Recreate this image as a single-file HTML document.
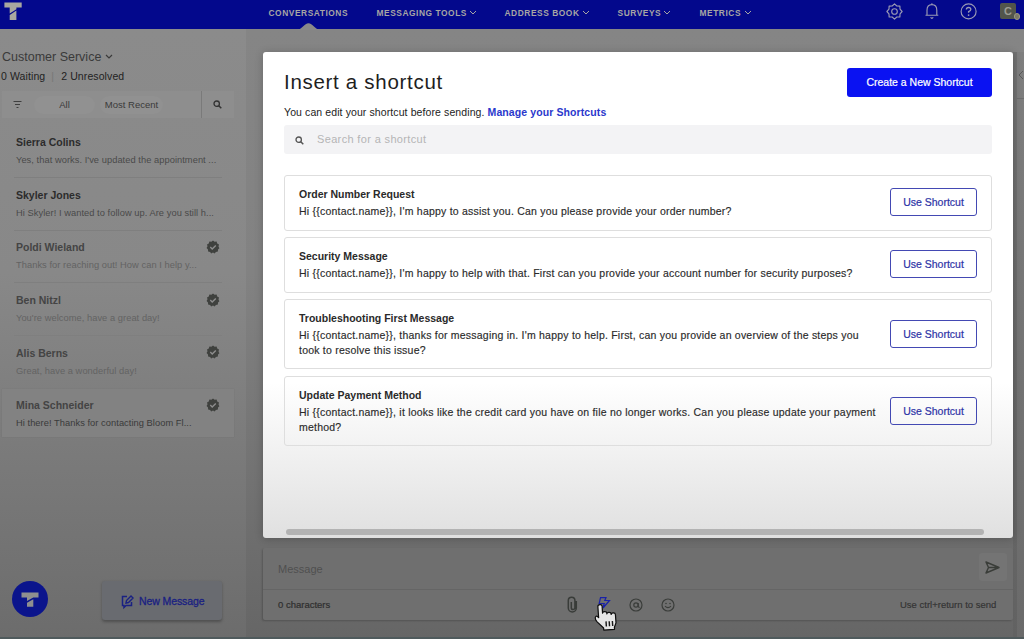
<!DOCTYPE html>
<html><head><meta charset="utf-8">
<style>
*{box-sizing:border-box;margin:0;padding:0}
html,body{width:1024px;height:639px;overflow:hidden}
body{font-family:"Liberation Sans",sans-serif;position:relative;background:#7c7c7c}
.abs{position:absolute}
svg{position:absolute;overflow:visible}
#nav{left:0;top:0;width:1024px;height:29px;background:#03088c}
.nv{position:absolute;top:8px;font-size:8.4px;font-weight:bold;color:#a7a6a4;letter-spacing:0.55px;white-space:nowrap}
#side{left:0;top:29px;width:246px;height:610px;background:linear-gradient(#8b8b8b,#888888 40%,#6c6c6c 100%)}
#main{left:246px;top:29px;width:778px;height:610px;background:linear-gradient(#858585,#828282 40%,#666666 100%)}
.name{position:absolute;left:16px;font-size:10.5px;font-weight:bold;color:#2c2c2c;white-space:nowrap}
.rs{color:#444}
.prev{position:absolute;left:16px;font-size:9.3px;color:#4a4a4a;white-space:nowrap;letter-spacing:0.05px}
.pr{color:#636363}
.sep{position:absolute;left:14px;width:208px;height:1px;background:#7f7f7f}
.badge{position:absolute;left:206px;width:13px;height:13px}
#modal{left:263px;top:52px;width:750px;height:486px;background:linear-gradient(#fff 0%,#fff 68%,#e0e0e0 100%);border-radius:3px;box-shadow:0 1px 9px rgba(0,0,0,0.22)}
.card{position:absolute;left:284px;width:708px;border:1px solid #dedede;border-radius:3px;background:transparent}
.ct{position:absolute;left:299px;font-size:10.5px;font-weight:bold;color:#2a2a2a;white-space:nowrap}
.cb{position:absolute;left:299px;font-size:10.5px;color:#2a2a2a;white-space:nowrap;line-height:14.5px;letter-spacing:0.22px;-webkit-text-stroke:0.15px #2a2a2a}
.ub{position:absolute;left:890px;width:87px;height:28px;border:1px solid #4349b3;border-radius:3px;color:#2d33a6;font-size:10.5px;text-align:center;line-height:26px;-webkit-text-stroke:0.2px #2d33a6}
</style></head><body>
<div id="nav" class="abs"></div>
<svg style="left:4px;top:2px" width="18" height="18" viewBox="0 0 18 18"><path d="M0.4 0.6H17.7V5.6H12.4V7.2L5.7 11.6V5.6H0.4Z" fill="#a9a8a0"/><path d="M5.7 13L12.4 8.6V17.9H5.7Z" fill="#a9a8a0"/></svg>
<div class="nv" style="left:268.5px">CONVERSATIONS</div>
<div class="nv" style="left:376.5px">MESSAGING TOOLS</div>
<div class="nv" style="left:504.5px">ADDRESS BOOK</div>
<div class="nv" style="left:617.5px">SURVEYS</div>
<div class="nv" style="left:699.5px">METRICS</div>
<svg style="left:469px;top:10px" width="8" height="5" viewBox="0 0 8 5"><path d="M1 1L4 4L7 1" fill="none" stroke="#a7a6a4" stroke-width="1"/></svg>
<svg style="left:582px;top:10px" width="8" height="5" viewBox="0 0 8 5"><path d="M1 1L4 4L7 1" fill="none" stroke="#a7a6a4" stroke-width="1"/></svg>
<svg style="left:663px;top:10px" width="8" height="5" viewBox="0 0 8 5"><path d="M1 1L4 4L7 1" fill="none" stroke="#a7a6a4" stroke-width="1"/></svg>
<svg style="left:744px;top:10px" width="8" height="5" viewBox="0 0 8 5"><path d="M1 1L4 4L7 1" fill="none" stroke="#a7a6a4" stroke-width="1"/></svg>
<!-- nav icons -->
<svg style="left:886px;top:3px" width="17" height="17" viewBox="0 0 17 17"><path d="M8.50 0.90 L10.80 2.96 L13.87 3.13 L14.04 6.20 L16.10 8.50 L14.04 10.80 L13.87 13.87 L10.80 14.04 L8.50 16.10 L6.20 14.04 L3.13 13.87 L2.96 10.80 L0.90 8.50 L2.96 6.20 L3.13 3.13 L6.20 2.96Z" fill="none" stroke="#9a9ab4" stroke-width="1.15" stroke-linejoin="round"/><circle cx="8.5" cy="8.5" r="2.8" fill="none" stroke="#9a9ab4" stroke-width="1.15"/></svg>
<svg style="left:924px;top:2px" width="16" height="19" viewBox="0 0 16 19"><path d="M1.5 13.2H14.3M3 13.2V8.2Q3 2.6 7.9 2.6T12.8 8.2V13.2" fill="none" stroke="#9a9ab4" stroke-width="1.15"/><path d="M7.9 1.2V2.6" stroke="#9a9ab4" stroke-width="1.1"/><path d="M6.6 15.3Q7.9 17.3 9.2 15.3" fill="none" stroke="#9a9ab4" stroke-width="1.15"/></svg>
<svg style="left:960px;top:3px" width="17" height="17" viewBox="0 0 17 17"><circle cx="8.6" cy="8.4" r="7.5" fill="none" stroke="#9a9ab4" stroke-width="1.15"/><path d="M6.4 6.6Q6.4 4.5 8.6 4.5T10.8 6.5Q10.8 7.8 8.6 8.6V9.8" fill="none" stroke="#9a9ab4" stroke-width="1.35"/><circle cx="8.6" cy="12.1" r="0.85" fill="#9a9ab4"/></svg>
<div class="abs" style="left:1000px;top:3px;width:16px;height:16px;background:#52554b;border-radius:2px"></div>
<div class="abs" style="left:1004px;top:5px;font-size:11px;font-weight:bold;color:#9c9c94">C</div>
<div class="abs" style="left:1013.5px;top:13px;width:6.5px;height:6.5px;border-radius:50%;background:#7a7866;border:1.4px solid #9a9684"></div>

<div id="side" class="abs"></div>
<div id="main" class="abs"></div>
<svg style="left:297px;top:22px" width="23" height="8" viewBox="0 0 23 8"><path d="M-1 8C5 8 7.5 1.3 11.5 1.3S18 8 24 8Z" fill="#8a8a8a"/></svg>
<!-- right sliver -->
<div class="abs" style="left:1013px;top:52px;width:4px;height:587px;background:linear-gradient(#727272,#626262)"></div>
<div class="abs" style="left:1017px;top:52px;width:7px;height:587px;background:linear-gradient(#7f7f7f,#6a6a6a)"></div>
<div class="abs" style="left:1017px;top:98px;width:7px;height:1px;background:#6e6e6e"></div>
<svg style="left:1018px;top:70px" width="6" height="10" viewBox="0 0 6 10"><path d="M5 1L1 5L5 9" fill="none" stroke="#5a5a5a" stroke-width="1"/></svg>

<!-- sidebar -->
<div class="abs" style="left:2px;top:50px;font-size:12.5px;color:#3a3a3a">Customer Service</div>
<svg style="left:105px;top:54px" width="8" height="5" viewBox="0 0 8 5"><path d="M1 1L4 4L7 1" fill="none" stroke="#3a3a3a" stroke-width="1.2"/></svg>
<div class="abs" style="left:1px;top:70px;font-size:10.5px;color:#222;letter-spacing:0.1px">0 Waiting <span style="color:#777">&nbsp;|&nbsp;</span> <span style="margin-left:1px">2 Unresolved</span></div>
<div class="abs" style="left:2px;top:91px;width:232px;height:27px;background:#8e8e8e"></div>
<svg style="left:13px;top:100px" width="9" height="9" viewBox="0 0 9 9"><path d="M0.5 1.5H8.5M2 4.5H7M3.5 7.5H5.5" stroke="#3e3e3e" stroke-width="1.2"/></svg>
<div class="abs" style="left:34px;top:96px;width:61px;height:18px;border-radius:9px;background:#919191;font-size:9.5px;text-align:center;line-height:18px;color:#3a3a3a">All</div>
<div class="abs" style="left:100px;top:96px;width:63px;height:18px;border-radius:9px;background:#919191;font-size:9.5px;text-align:center;line-height:18px;color:#3a3a3a">Most Recent</div>
<div class="abs" style="left:201px;top:91px;width:1px;height:27px;background:#7a7a7a"></div>
<svg style="left:213px;top:100px" width="9" height="9" viewBox="0 0 9 9"><circle cx="3.7" cy="3.7" r="2.7" fill="none" stroke="#333" stroke-width="1.3"/><path d="M5.8 5.8L8.3 8.3" stroke="#333" stroke-width="1.5"/></svg>

<div class="name" style="top:136px">Sierra Colins</div>
<div class="prev" style="top:155px">Yes, that works. I've updated the appointment ...</div>
<div class="sep" style="top:177px"></div>
<div class="name" style="top:189px">Skyler Jones</div>
<div class="prev" style="top:208px">Hi Skyler! I wanted to follow up. Are you still h...</div>
<div class="sep" style="top:230px"></div>
<div class="name rs" style="top:241px">Poldi Wieland</div>
<div class="prev pr" style="top:260px">Thanks for reaching out! How can I help y...</div>
<div class="sep" style="top:282px"></div>
<div class="name rs" style="top:294px">Ben Nitzl</div>
<div class="prev pr" style="top:313px">You're welcome, have a great day!</div>
<div class="sep" style="top:335px"></div>
<div class="name rs" style="top:347px">Alis Berns</div>
<div class="prev pr" style="top:366px">Great, have a wonderful day!</div>
<div class="abs" style="left:2px;top:389px;width:232px;height:48px;background:#828282;box-shadow:0 0 1px rgba(0,0,0,0.15)"></div>
<div class="name rs" style="top:399px">Mina Schneider</div>
<div class="prev" style="top:418px;color:#3a3a3a">Hi there! Thanks for contacting Bloom Fl...</div>
<svg style="left:206px;top:240px" width="14" height="14" viewBox="0 0 14 14"><use href="#seal"/></svg>
<svg style="left:206px;top:293px" width="14" height="14" viewBox="0 0 14 14"><use href="#seal"/></svg>
<svg style="left:206px;top:345px" width="14" height="14" viewBox="0 0 14 14"><use href="#seal"/></svg>
<svg style="left:206px;top:398px" width="14" height="14" viewBox="0 0 14 14"><use href="#seal"/></svg>
<svg width="0" height="0"><defs><g id="seal"><path d="M7 .6l1.6 1.2 2-.2.6 1.9 1.8 1-.5 1.9.9 1.8-1.4 1.4-.1 2-2 .4L8.6 13.4 7 12.5 5.2 13.4 4.1 11.9l-2-.4-.1-2L.6 8.1l.9-1.8L1 4.4l1.8-1 .6-1.9 2 .2z" fill="#3f413e"/><path d="M4.3 7.1l1.9 1.9 3.6-3.6" fill="none" stroke="#8d8d8d" stroke-width="1.4"/></g></defs></svg>

<!-- bottom left -->
<div class="abs" style="left:12px;top:581px;width:36px;height:36px;border-radius:50%;background:#0b148c"></div>
<svg style="left:20px;top:590px" width="20" height="20" viewBox="0 0 20 20"><path d="M1.5 2.5H18.5V7.5H13.3L7 11V7.5H1.5Z" fill="#8f8f8f"/><path d="M13.3 9.3V16.8H7V12.8Z" fill="#8f8f8f"/></svg>
<div class="abs" style="left:102px;top:581px;width:120px;height:39px;border-radius:3px;background:#696b70;box-shadow:0 1.5px 3px rgba(0,0,0,0.28)"></div>
<svg style="left:121px;top:595px" width="13" height="13" viewBox="0 0 13 13"><path d="M6 1.5H1.5V10.5H3V12.5L5 10.5H10.5V7" fill="none" stroke="#1a2182" stroke-width="1.5"/><path d="M5 8L5.5 5.5L10 1L12 3L7.5 7.5Z" fill="none" stroke="#1a2182" stroke-width="1.4"/></svg>
<div class="abs" style="left:139px;top:595px;font-size:10.5px;color:#1a2182;letter-spacing:-0.1px;-webkit-text-stroke:0.3px #1a2182">New Message</div>

<!-- modal -->
<div id="modal" class="abs"></div>
<div class="abs" style="left:284px;top:70px;font-size:20.5px;color:#1e1e1e;letter-spacing:0.7px">Insert a shortcut</div>
<div class="abs" style="left:284px;top:106px;font-size:10.5px;color:#222;letter-spacing:0.1px">You can edit your shortcut before sending. <b style="color:#2a38cc">Manage your Shortcuts</b></div>
<div class="abs" style="left:847px;top:68px;width:145px;height:29px;background:#0a12f2;border-radius:3px;color:#fff;font-size:10.5px;text-align:center;line-height:29px;-webkit-text-stroke:0.2px #fff">Create a New Shortcut</div>
<div class="abs" style="left:284px;top:125px;width:708px;height:29px;background:#f3f3f5;border-radius:3px"></div>
<svg style="left:295px;top:136px" width="9" height="9" viewBox="0 0 9 9"><circle cx="3.7" cy="3.7" r="2.7" fill="none" stroke="#555" stroke-width="1.3"/><path d="M5.8 5.8L8.3 8.3" stroke="#555" stroke-width="1.5"/></svg>
<div class="abs" style="left:317px;top:133px;font-size:11px;color:#b5b5b5;letter-spacing:0.35px">Search for a shortcut</div>

<div class="card" style="top:175px;height:56px"></div>
<div class="ct" style="top:188px">Order Number Request</div>
<div class="cb" style="top:204px">Hi {{contact.name}}, I'm happy to assist you. Can you please provide your order number?</div>
<div class="ub" style="top:188px">Use Shortcut</div>

<div class="card" style="top:237px;height:56px"></div>
<div class="ct" style="top:250px">Security Message</div>
<div class="cb" style="top:266px">Hi {{contact.name}}, I'm happy to help with that. First can you provide your account number for security purposes?</div>
<div class="ub" style="top:250px">Use Shortcut</div>

<div class="card" style="top:299px;height:70px"></div>
<div class="ct" style="top:312px">Troubleshooting First Message</div>
<div class="cb" style="top:328px">Hi {{contact.name}}, thanks for messaging in. I'm happy to help. First, can you provide an overview of the steps you<br>took to resolve this issue?</div>
<div class="ub" style="top:320px">Use Shortcut</div>

<div class="card" style="top:375.5px;height:70.5px"></div>
<div class="ct" style="top:389px">Update Payment Method</div>
<div class="cb" style="top:405px">Hi {{contact.name}}, it looks like the credit card you have on file no longer works. Can you please update your payment<br>method?</div>
<div class="ub" style="top:397px">Use Shortcut</div>
<div class="abs" style="left:286px;top:529px;width:698px;height:6px;border-radius:3px;background:#b3b3b3"></div>

<!-- composer -->
<div class="abs" style="left:263px;top:548px;width:750px;height:72px;background:#6f6f6f;border-radius:2px;box-shadow:-1px 1px 2px rgba(0,0,0,0.2)"></div>
<div class="abs" style="left:263px;top:589px;width:750px;height:1px;background:#656565"></div>
<div class="abs" style="left:278px;top:563px;font-size:11px;color:#505050">Message</div>
<div class="abs" style="left:979px;top:553px;width:28px;height:28px;border-radius:3px;background:#747474"></div>
<svg style="left:985px;top:561px" width="15" height="13" viewBox="0 0 15 13"><path d="M1 1L14 6.5L1 12L3.5 6.5Z M3.5 6.5H14" fill="none" stroke="#3a3d39" stroke-width="1.45" stroke-linejoin="round"/></svg>
<div class="abs" style="left:278px;top:599px;font-size:9.5px;color:#2e2e2e;-webkit-text-stroke:0.2px #2e2e2e">0 characters</div>
<div class="abs" style="left:900px;top:599px;font-size:9.5px;color:#333;-webkit-text-stroke:0.15px #333">Use ctrl+return to send</div>
<svg style="left:566px;top:596px" width="14" height="17" viewBox="0 0 14 17"><path d="M10.3 5V12A4 4 0 0 1 2.3 12V4.6A3.3 3.3 0 0 1 8.9 4.6V11.8A1.8 1.8 0 0 1 5.3 11.8V6" fill="none" stroke="#393c39" stroke-width="1.5"/></svg>
<svg style="left:598px;top:597px" width="13" height="12" viewBox="0 0 13 12"><path d="M2.5 0.7H8L6.8 3.5H11.5L5 11L6.2 6.5H1.2Z" fill="none" stroke="#1a22a8" stroke-width="1.2"/></svg>
<svg style="left:629px;top:598px" width="14" height="14" viewBox="0 0 14 14"><circle cx="7" cy="7" r="6" fill="none" stroke="#3a3d3a" stroke-width="1.2"/><circle cx="7" cy="7" r="2.2" fill="none" stroke="#3a3d3a" stroke-width="1.2"/><path d="M9.2 5V8Q9.2 9.5 10.8 9.2" fill="none" stroke="#3a3d3a" stroke-width="1.1"/></svg>
<svg style="left:661px;top:598px" width="14" height="14" viewBox="0 0 14 14"><circle cx="7" cy="7" r="6" fill="none" stroke="#3a3d3a" stroke-width="1.2"/><circle cx="5" cy="5.5" r="0.8" fill="#3a3d3a"/><circle cx="9" cy="5.5" r="0.8" fill="#3a3d3a"/><path d="M4 8.2Q7 11 10 8.2" fill="none" stroke="#3a3d3a" stroke-width="1.1"/></svg>
<!-- hand cursor -->
<svg style="left:594px;top:602px" width="26" height="29" viewBox="0 0 26 29"><g transform="translate(1.2,0.8) rotate(-4 12 26) scale(1.06)"><path d="M4 3Q4 1.2 6 1.2Q8 1.2 8 3V9.5Q8 8.2 10 8.2Q12 8.2 12 9.8V10.5Q12 9.2 14 9.2Q16 9.2 16 10.8V11.3Q16 10 18 10Q20 10 20 11.8V19.5L18.2 23.5V25.5H8V23.5L2.3 17.3Q0.5 15 0.8 13.2Q1.5 11.2 3 12.3L4 13.5Z" fill="#e6e6e6" stroke="#0e0e0e" stroke-width="1.15" stroke-linejoin="round"/><path d="M10.7 17.5V22.3M13.7 17.5V22.3M16.7 17.5V22.3" stroke="#1a1a1a" stroke-width="1.35"/></g></svg>
<!-- bottom strip -->
<div class="abs" style="left:0;top:637px;width:1024px;height:2px;background:#4f5a5c"></div>
</body></html>
